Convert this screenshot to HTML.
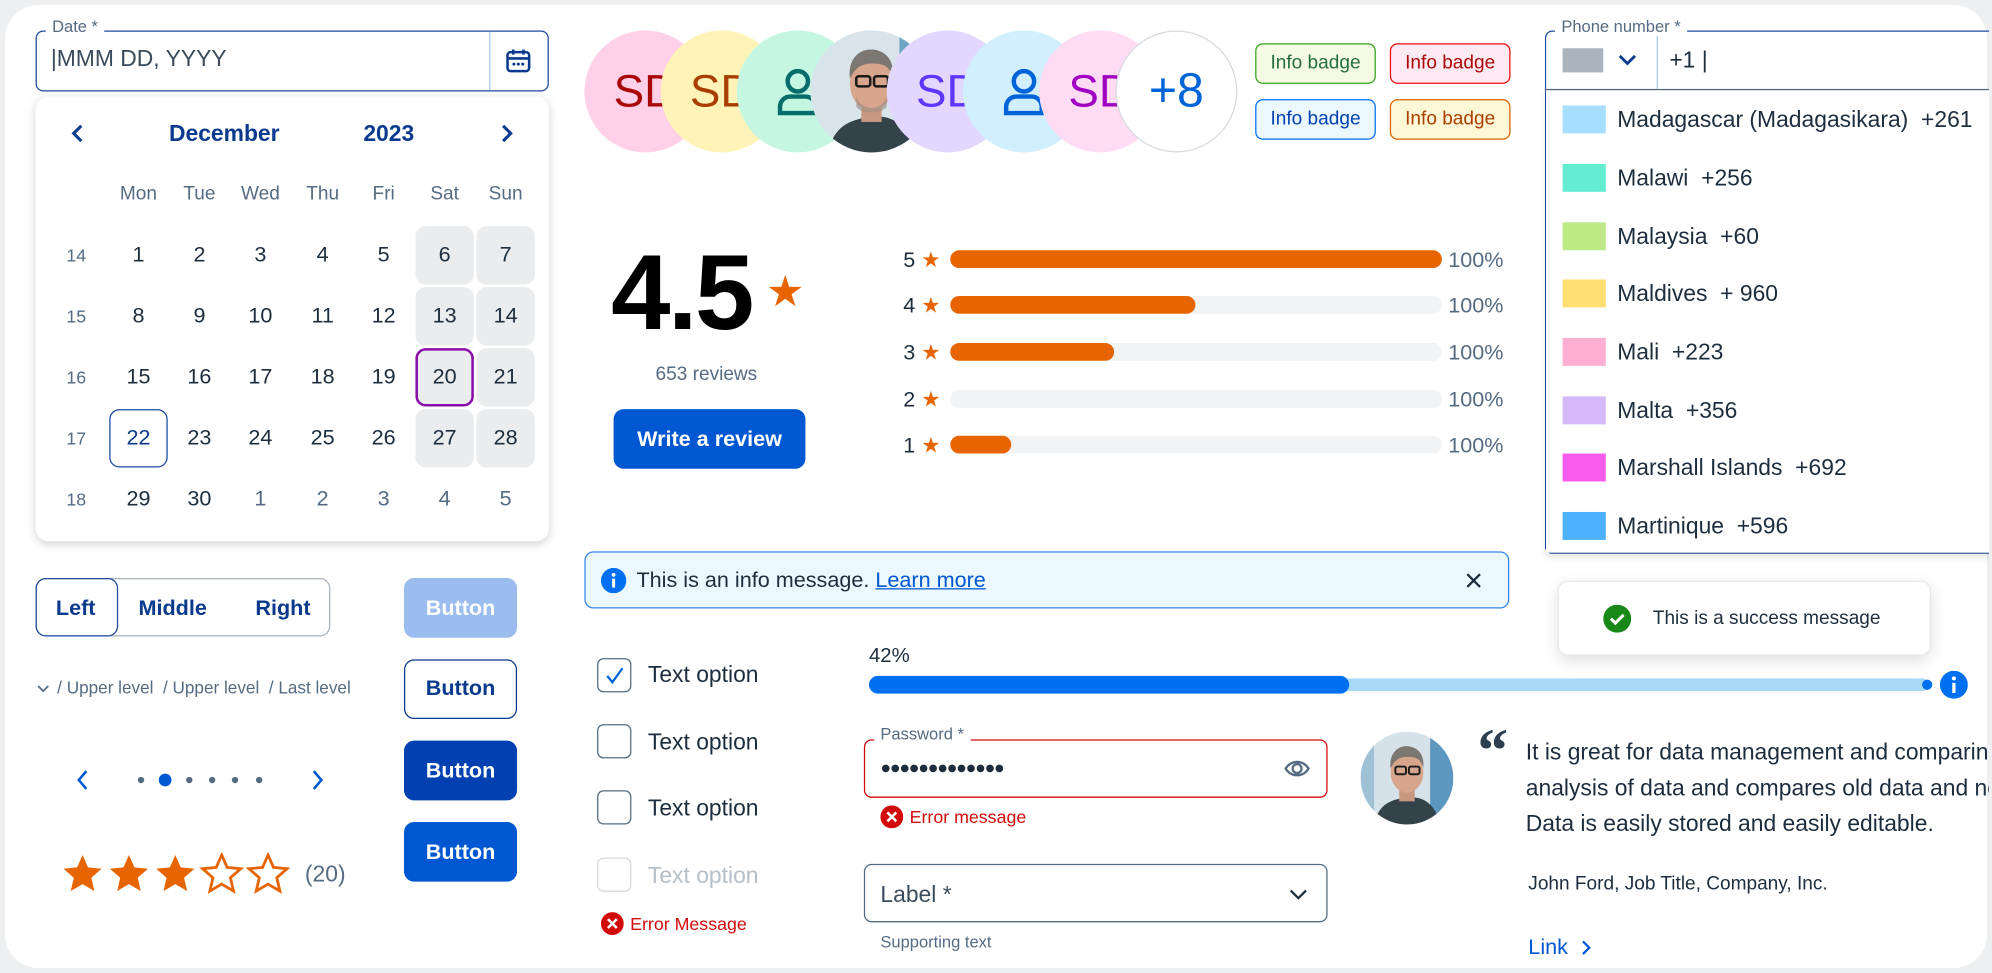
<!DOCTYPE html>
<html><head><meta charset="utf-8"><style>
*{box-sizing:border-box;margin:0;padding:0}
html,body{width:1992px;height:973px;overflow:hidden;background:#eeeff1;font-family:"Liberation Sans",sans-serif;color:#1d2d3e}
#w{position:absolute;left:0;top:0;width:1568px;height:766px;transform:scale(1.27041);transform-origin:0 0}
.card{position:absolute;left:4px;top:4px;width:1560px;height:758px;background:#fff;border-radius:26px}
.a{position:absolute}
.t{position:absolute;white-space:nowrap}
.cell{position:absolute;width:46px;height:46px;line-height:46px;text-align:center;font-size:17px;color:#1d2d3e;border-radius:8px}
.we{background:#eaecee}
.wk{position:absolute;width:30px;text-align:center;font-size:14px;color:#556b82}
.av{position:absolute;top:24px;width:96px;height:96px;border-radius:50%;overflow:hidden;text-align:center;line-height:96px;font-size:36px}
.badge{position:absolute;height:32px;width:95px;border-radius:6px;border:1px solid;font-size:15px;line-height:30px;text-align:center}
.bar{position:absolute;left:748px;width:387px;height:14px;border-radius:7px;background:#f1f3f4}
.bar i{position:absolute;left:0;top:0;height:14px;border-radius:7px;background:#e76500}
.btn{position:absolute;left:318px;width:89px;height:47px;border-radius:8px;text-align:center;line-height:47px;font-size:17px;font-weight:bold;color:#fff}
.cb{position:absolute;left:470px;width:27px;height:27px;border:1.5px solid #556b82;border-radius:5px;background:#fff}
.ct{position:absolute;left:510px;font-size:18px;color:#1d2d3e}
.sw{position:absolute;left:1230px;width:34px;height:22px}
.ctry{position:absolute;left:1273px;font-size:18px;color:#1d2d3e;white-space:nowrap}
</style></head><body><div id="w">
<div class="card"></div>

<div class="a" style="left:28px;top:24px;width:404px;height:48px;border:1.5px solid #1b4aa0;border-radius:6px"></div>
<div class="a" style="left:385px;top:25px;width:1px;height:46px;background:#a6cdf3"></div>
<div class="t" style="left:36px;top:13px;background:#fff;padding:0 5px;font-size:13px;color:#556b82">Date *</div>
<div class="t" style="left:40px;top:36px;font-size:18px;color:#3c4b5c">|MMM DD, YYYY</div>
<svg class="a" style="left:397px;top:37px" width="22" height="22" viewBox="0 0 22 22"><rect x="2.5" y="4" width="17" height="15" rx="2.5" fill="none" stroke="#0a3a8e" stroke-width="2"/><line x1="2.5" y1="9" x2="19.5" y2="9" stroke="#0a3a8e" stroke-width="2"/><line x1="7" y1="2" x2="7" y2="6" stroke="#0a3a8e" stroke-width="2"/><line x1="15" y1="2" x2="15" y2="6" stroke="#0a3a8e" stroke-width="2"/><circle cx="7.5" cy="13.5" r="1.2" fill="#0a3a8e"/><circle cx="11" cy="13.5" r="1.2" fill="#0a3a8e"/><circle cx="14.5" cy="13.5" r="1.2" fill="#0a3a8e"/></svg>

<div class="a" style="left:28px;top:76px;width:404px;height:350px;background:#fff;border-radius:10px;box-shadow:0 2px 8px rgba(0,0,0,.18)"></div>
<svg class="a" style="left:54px;top:97px" width="14" height="16"><path d="M10 2L4 8l6 6" fill="none" stroke="#0a3a8e" stroke-width="2.4"/></svg>
<svg class="a" style="left:392px;top:97px" width="14" height="16"><path d="M4 2l6 6-6 6" fill="none" stroke="#0a3a8e" stroke-width="2.4"/></svg>
<div class="t" style="left:133px;top:95px;font-size:18px;font-weight:bold;color:#0a3a8e">December</div>
<div class="t" style="left:286px;top:95px;font-size:18px;font-weight:bold;color:#0a3a8e">2023</div>
<div class="t" style="left:86px;top:144px;width:340px;font-size:15px;color:#556b82">
<span class="t" style="left:0;width:46px;text-align:center">Mon</span><span class="t" style="left:48px;width:46px;text-align:center">Tue</span><span class="t" style="left:96px;width:46px;text-align:center">Wed</span><span class="t" style="left:145px;width:46px;text-align:center">Thu</span><span class="t" style="left:193px;width:46px;text-align:center">Fri</span><span class="t" style="left:241px;width:46px;text-align:center">Sat</span><span class="t" style="left:289px;width:46px;text-align:center">Sun</span></div>
<div class="wk" style="left:45px;top:193px">14</div><div class="wk" style="left:45px;top:241px">15</div><div class="wk" style="left:45px;top:289px">16</div><div class="wk" style="left:45px;top:337px">17</div><div class="wk" style="left:45px;top:385px">18</div>
<div class="cell" style="left:86px;top:178px">1</div><div class="cell" style="left:134px;top:178px">2</div><div class="cell" style="left:182px;top:178px">3</div><div class="cell" style="left:231px;top:178px">4</div><div class="cell" style="left:279px;top:178px">5</div><div class="cell we" style="left:327px;top:178px">6</div><div class="cell we" style="left:375px;top:178px">7</div>
<div class="cell" style="left:86px;top:226px">8</div><div class="cell" style="left:134px;top:226px">9</div><div class="cell" style="left:182px;top:226px">10</div><div class="cell" style="left:231px;top:226px">11</div><div class="cell" style="left:279px;top:226px">12</div><div class="cell we" style="left:327px;top:226px">13</div><div class="cell we" style="left:375px;top:226px">14</div>
<div class="cell" style="left:86px;top:274px">15</div><div class="cell" style="left:134px;top:274px">16</div><div class="cell" style="left:182px;top:274px">17</div><div class="cell" style="left:231px;top:274px">18</div><div class="cell" style="left:279px;top:274px">19</div><div class="cell we" style="left:327px;top:274px;border:2px solid #8a0eaa;line-height:42px">20</div><div class="cell we" style="left:375px;top:274px">21</div>
<div class="cell" style="left:86px;top:322px;border:1.5px solid #1b4aa0;color:#0a3a8e;line-height:43px">22</div><div class="cell" style="left:134px;top:322px">23</div><div class="cell" style="left:182px;top:322px">24</div><div class="cell" style="left:231px;top:322px">25</div><div class="cell" style="left:279px;top:322px">26</div><div class="cell we" style="left:327px;top:322px">27</div><div class="cell we" style="left:375px;top:322px">28</div>
<div class="cell" style="left:86px;top:370px">29</div><div class="cell" style="left:134px;top:370px">30</div><div class="cell" style="left:182px;top:370px;color:#556b82">1</div><div class="cell" style="left:231px;top:370px;color:#556b82">2</div><div class="cell" style="left:279px;top:370px;color:#556b82">3</div><div class="cell" style="left:327px;top:370px;color:#556b82">4</div><div class="cell" style="left:375px;top:370px;color:#556b82">5</div>

<div class="av" style="left:460px;background:#ffd0e7;color:#aa0808">SD</div>
<div class="av" style="left:520px;background:#fff3b8;color:#a93e00">SD</div>
<div class="av" style="left:580px;background:#c5f6e2"><svg style="margin-top:28px" width="40" height="40" viewBox="0 0 40 40"><circle cx="20" cy="12" r="8" fill="none" stroke="#046c6a" stroke-width="3.5"/><path d="M6 37v-5a8 8 0 0 1 8-8h12a8 8 0 0 1 8 8v5z" fill="none" stroke="#046c6a" stroke-width="3.5"/></svg></div>
<div class="av" style="left:638px;background:#cfe1ea"><svg width="96" height="96" viewBox="0 0 96 96"><rect width="96" height="96" fill="#d9e4ea"/><rect x="70" y="0" width="26" height="96" fill="#6ea4c4"/><path d="M14 96c4-20 16-26 34-28s30 8 34 28z" fill="#34424a"/><rect x="40" y="56" width="16" height="16" fill="#c99880"/><ellipse cx="48" cy="42" rx="17" ry="21" fill="#d7a58c"/><path d="M31 38c-2-16 8-24 18-23s17 8 16 22c-3-8-6-11-16-11s-14 4-18 12z" fill="#7d7772"/><rect x="36" y="36" width="11" height="8" rx="2" fill="none" stroke="#1a1a1a" stroke-width="2"/><rect x="50" y="36" width="11" height="8" rx="2" fill="none" stroke="#1a1a1a" stroke-width="2"/><path d="M36 52c4 12 20 12 24 0v8c-4 6-20 6-24 0z" fill="#9a8a80" opacity=".6"/></svg></div>
<div class="av" style="left:698px;background:#e2d8ff;color:#5d36ff">SD</div>
<div class="av" style="left:758px;background:#d1efff"><svg style="margin-top:28px" width="40" height="40" viewBox="0 0 40 40"><circle cx="20" cy="12" r="8" fill="none" stroke="#0064d9" stroke-width="3.5"/><path d="M6 37v-5a8 8 0 0 1 8-8h12a8 8 0 0 1 8 8v5z" fill="none" stroke="#0064d9" stroke-width="3.5"/></svg></div>
<div class="av" style="left:818px;background:#ffdcf3;color:#a100c2">SD</div>
<div class="av" style="left:878px;background:#fff;border:1px solid #d5dadd;color:#0064d9;font-size:38px;line-height:94px">+8</div>

<div class="badge" style="left:988px;top:34px;border-color:#36a41d;background:#f5fae5;color:#256f3a">Info badge</div>
<div class="badge" style="left:1094px;top:34px;border-color:#e90b0b;background:#ffeaf4;color:#aa0808">Info badge</div>
<div class="badge" style="left:988px;top:78px;border-color:#0070f2;background:#ebf8ff;color:#0040b0">Info badge</div>
<div class="badge" style="left:1094px;top:78px;border-color:#dd6100;background:#fff8d6;color:#a93e00">Info badge</div>

<div class="t" style="left:481px;top:182px;font-size:84px;font-weight:bold;color:#000;letter-spacing:-2px">4.5</div>
<div class="t" style="left:603px;top:210px;font-size:34px;color:#e76500">★</div>
<div class="t" style="left:516px;top:286px;font-size:15px;color:#556b82">653 reviews</div>
<div class="a" style="left:483px;top:322px;width:151px;height:47px;border-radius:8px;background:#0057d2;color:#fff;font-size:17px;font-weight:bold;text-align:center;line-height:47px">Write a review</div>
<div class="t" style="left:711px;top:195px;font-size:17px;line-height:20px">5 <span style="color:#e76500">★</span></div>
<div class="t" style="left:711px;top:231px;font-size:17px;line-height:20px">4 <span style="color:#e76500">★</span></div>
<div class="t" style="left:711px;top:268px;font-size:17px;line-height:20px">3 <span style="color:#e76500">★</span></div>
<div class="t" style="left:711px;top:305px;font-size:17px;line-height:20px">2 <span style="color:#e76500">★</span></div>
<div class="t" style="left:711px;top:341px;font-size:17px;line-height:20px">1 <span style="color:#e76500">★</span></div>
<div class="bar" style="top:197px"><i style="width:387px"></i></div>
<div class="bar" style="top:233px"><i style="width:193px"></i></div>
<div class="bar" style="top:270px"><i style="width:129px"></i></div>
<div class="bar" style="top:307px"></div>
<div class="bar" style="top:343px"><i style="width:48px"></i></div>
<div class="t" style="left:1140px;top:195px;font-size:17px;color:#556b82">100%</div>
<div class="t" style="left:1140px;top:231px;font-size:17px;color:#556b82">100%</div>
<div class="t" style="left:1140px;top:268px;font-size:17px;color:#556b82">100%</div>
<div class="t" style="left:1140px;top:305px;font-size:17px;color:#556b82">100%</div>
<div class="t" style="left:1140px;top:341px;font-size:17px;color:#556b82">100%</div>

<div class="a" style="left:1216px;top:24px;width:360px;height:412px;border:1.5px solid #1b4aa0;border-radius:6px;border-right:none"></div>
<div class="a" style="left:1216px;top:70px;width:360px;height:1.5px;background:#556b82"></div>
<div class="a" style="left:1217px;top:71px;width:360px;height:364px;background:#fff;box-shadow:0 3px 6px rgba(0,0,0,.12)"></div>
<div class="a" style="left:1304px;top:25px;width:1px;height:45px;background:#a6cdf3"></div>
<div class="t" style="left:1224px;top:13px;background:#fff;padding:0 5px;font-size:13px;color:#556b82">Phone number *</div>
<div class="a" style="left:1230px;top:38px;width:32px;height:19px;background:#a9b4be"></div>
<svg class="a" style="left:1273px;top:41px" width="16" height="12"><path d="M2 3l6 6 6-6" fill="none" stroke="#0a3a8e" stroke-width="2.2"/></svg>
<div class="t" style="left:1314px;top:37px;font-size:18px">+1 |</div>
<div class="sw" style="top:83px;background:#a6deff"></div><div class="ctry" style="top:84px">Madagascar (Madagasikara) &nbsp;+261</div>
<div class="sw" style="top:129px;background:#64edd2"></div><div class="ctry" style="top:130px">Malawi &nbsp;+256</div>
<div class="sw" style="top:175px;background:#bde986"></div><div class="ctry" style="top:176px">Malaysia &nbsp;+60</div>
<div class="sw" style="top:220px;background:#ffdf72"></div><div class="ctry" style="top:221px">Maldives &nbsp;+ 960</div>
<div class="sw" style="top:266px;background:#ffafd2"></div><div class="ctry" style="top:267px">Mali &nbsp;+223</div>
<div class="sw" style="top:312px;background:#d5b8f8"></div><div class="ctry" style="top:313px">Malta &nbsp;+356</div>
<div class="sw" style="top:357px;background:#f75cec"></div><div class="ctry" style="top:358px">Marshall Islands &nbsp;+692</div>
<div class="sw" style="top:403px;background:#4db1ff"></div><div class="ctry" style="top:404px">Martinique &nbsp;+596</div>

<div class="a" style="left:1226px;top:457px;width:294px;height:59px;background:#fff;border:1px solid #e5e8ea;border-radius:8px;box-shadow:0 4px 12px rgba(0,0,0,.12)"></div>
<svg class="a" style="left:1262px;top:476px" width="22" height="22"><circle cx="11" cy="11" r="11" fill="#188918"/><path d="M6 11l3.5 3.5L16 8" fill="none" stroke="#fff" stroke-width="2.4"/></svg>
<div class="t" style="left:1301px;top:478px;font-size:15px">This is a success message</div>

<div class="a" style="left:460px;top:434px;width:728px;height:45px;background:#ebf8ff;border:1.5px solid #3585e6;border-radius:7px"></div>
<svg class="a" style="left:473px;top:447px" width="20" height="20"><circle cx="10" cy="10" r="10" fill="#0070f2"/><rect x="8.8" y="8.5" width="2.4" height="7" fill="#fff"/><circle cx="10" cy="5.5" r="1.5" fill="#fff"/></svg>
<div class="t" style="left:501px;top:447px;font-size:17px">This is an info message. <span style="color:#0057d2;text-decoration:underline">Learn more</span></div>
<svg class="a" style="left:1154px;top:451px" width="12" height="12"><path d="M1 1l10 10M11 1L1 11" stroke="#1d2d3e" stroke-width="1.8"/></svg>

<div class="a" style="left:28px;top:455px;width:232px;height:46px;border:1px solid #a9b4be;border-radius:8px"></div>
<div class="a" style="left:28px;top:455px;width:65px;height:46px;border:1.5px solid #1b4aa0;border-radius:8px"></div>
<div class="t" style="left:44px;top:469px;font-size:17px;font-weight:bold;color:#0a3a8e">Left</div>
<div class="t" style="left:109px;top:469px;font-size:17px;font-weight:bold;color:#0a3a8e">Middle</div>
<div class="t" style="left:201px;top:469px;font-size:17px;font-weight:bold;color:#0a3a8e">Right</div>

<div class="btn" style="top:455px;background:#9bbcee">Button</div>
<div class="btn" style="top:519px;background:#fff;border:1.5px solid #0a3a8e;color:#0a3a8e;line-height:44px">Button</div>
<div class="btn" style="top:583px;background:#0040b0">Button</div>
<div class="btn" style="top:647px;background:#0057d2">Button</div>

<svg class="a" style="left:29px;top:538px" width="10" height="8"><path d="M1 2l4 4 4-4" fill="none" stroke="#556b82" stroke-width="1.4"/></svg>
<div class="t" style="left:45px;top:534px;font-size:13.5px;color:#556b82">/ Upper level &nbsp;/ Upper level &nbsp;/ Last level</div>

<svg class="a" style="left:59px;top:605px" width="12" height="18"><path d="M9 2L3 9l6 7" fill="none" stroke="#0057d2" stroke-width="2"/></svg>
<svg class="a" style="left:244px;top:605px" width="12" height="18"><path d="M3 2l6 7-6 7" fill="none" stroke="#0057d2" stroke-width="2"/></svg>
<svg class="a" style="left:105px;top:606px" width="105" height="16"><circle cx="6" cy="8" r="2.5" fill="#556b82"/><circle cx="25" cy="8" r="5" fill="#0057d2"/><circle cx="44" cy="8" r="2.5" fill="#556b82"/><circle cx="62" cy="8" r="2.5" fill="#556b82"/><circle cx="80" cy="8" r="2.5" fill="#556b82"/><circle cx="99" cy="8" r="2.5" fill="#556b82"/></svg>

<svg class="a" style="left:48px;top:671px" width="182" height="34" viewBox="0 0 182 34">
<defs><path id="s" d="M17 2l4.3 9.8 10.7 1-8.1 7.1 2.4 10.5L17 24.9 7.7 30.4l2.4-10.5L2 12.8l10.7-1z"/></defs>
<use href="#s" fill="#e76500"/><use href="#s" x="36.5" fill="#e76500"/><use href="#s" x="73" fill="#e76500"/><use href="#s" x="109.5" fill="none" stroke="#e76500" stroke-width="2.2"/><use href="#s" x="146" fill="none" stroke="#e76500" stroke-width="2.2"/></svg>
<div class="t" style="left:240px;top:678px;font-size:18px;color:#556b82">(20)</div>

<div class="cb" style="top:518px"></div><svg class="a" style="left:475px;top:523px" width="18" height="18"><path d="M3 9l4 5 8-11" fill="none" stroke="#0064d9" stroke-width="1.8"/></svg>
<div class="ct" style="top:521px">Text option</div>
<div class="cb" style="top:570px"></div><div class="ct" style="top:574px">Text option</div>
<div class="cb" style="top:622px"></div><div class="ct" style="top:626px">Text option</div>
<div class="cb" style="top:675px;border-color:#d5dadd"></div><div class="ct" style="top:679px;color:#b6bfc7">Text option</div>
<svg class="a" style="left:473px;top:718px" width="18" height="18"><circle cx="9" cy="9" r="9" fill="#d20a0a"/><path d="M5.5 5.5l7 7M12.5 5.5l-7 7" stroke="#fff" stroke-width="2"/></svg>
<div class="t" style="left:496px;top:719px;font-size:14px;color:#d20a0a">Error Message</div>

<div class="t" style="left:684px;top:508px;font-size:16px">42%</div>
<div class="a" style="left:684px;top:534px;width:834px;height:10px;border-radius:5px;background:#a9d9f8"></div>
<div class="a" style="left:684px;top:532px;width:378px;height:14px;border-radius:7px;background:#0070f2"></div>
<div class="a" style="left:1513px;top:535px;width:8px;height:8px;border-radius:50%;background:#0070f2"></div>
<svg class="a" style="left:1527px;top:528px" width="22" height="22"><circle cx="11" cy="11" r="11" fill="#0070f2"/><rect x="9.7" y="9.5" width="2.6" height="8" fill="#fff"/><circle cx="11" cy="6" r="1.6" fill="#fff"/></svg>

<div class="a" style="left:680px;top:582px;width:365px;height:46px;border:1.5px solid #d20a0a;border-radius:6px"></div>
<div class="t" style="left:688px;top:570px;background:#fff;padding:0 5px;font-size:13px;color:#556b82">Password *</div>
<div class="t" style="left:693px;top:596px;font-size:14px;letter-spacing:-1px;color:#1d2d3e">●●●●●●●●●●●●●</div>
<svg class="a" style="left:1010px;top:594px" width="22" height="22"><path d="M2 11c4-7 14-7 18 0-4 7-14 7-18 0z" fill="none" stroke="#556b82" stroke-width="1.8"/><circle cx="11" cy="11" r="3.5" fill="none" stroke="#556b82" stroke-width="1.8"/></svg>
<svg class="a" style="left:693px;top:634px" width="18" height="18"><circle cx="9" cy="9" r="9" fill="#d20a0a"/><path d="M5.5 5.5l7 7M12.5 5.5l-7 7" stroke="#fff" stroke-width="2"/></svg>
<div class="t" style="left:716px;top:635px;font-size:14px;color:#d20a0a">Error message</div>

<div class="a" style="left:680px;top:680px;width:365px;height:46px;border:1.5px solid #556b82;border-radius:6px"></div>
<div class="t" style="left:693px;top:694px;font-size:18px;color:#3c4b5c">Label *</div>
<svg class="a" style="left:1014px;top:698px" width="16" height="12"><path d="M2 3l6 6 6-6" fill="none" stroke="#1d2d3e" stroke-width="1.8"/></svg>
<div class="t" style="left:693px;top:734px;font-size:13px;color:#556b82">Supporting text</div>

<div class="a" style="left:1071px;top:576px;width:73px;height:73px;border-radius:50%;overflow:hidden"><svg width="73" height="73" viewBox="0 0 96 96"><rect width="96" height="96" fill="#d5e2ea"/><rect x="72" y="0" width="24" height="96" fill="#5c97c0"/><rect x="0" y="0" width="14" height="96" fill="#9fc1d6"/><path d="M14 96c4-20 16-26 34-28s30 8 34 28z" fill="#34424a"/><rect x="40" y="56" width="16" height="16" fill="#c99880"/><ellipse cx="48" cy="42" rx="17" ry="21" fill="#d7a58c"/><path d="M31 38c-2-16 8-24 18-23s17 8 16 22c-3-8-6-11-16-11s-14 4-18 12z" fill="#7d7772"/><rect x="36" y="36" width="11" height="8" rx="2" fill="none" stroke="#1a1a1a" stroke-width="2"/><rect x="50" y="36" width="11" height="8" rx="2" fill="none" stroke="#1a1a1a" stroke-width="2"/></svg></div>
<div class="t" style="left:1163px;top:562px;font-size:48px;font-weight:bold;color:#2c3e50;font-family:'Liberation Serif',serif;line-height:60px">“</div>
<div class="t" style="left:1201px;top:578px;font-size:18px;line-height:28px">It is great for data management and comparing<br>analysis of data and compares old data and new.<br>Data is easily stored and easily editable.</div>
<div class="t" style="left:1203px;top:687px;font-size:15px">John Ford, Job Title, Company, Inc.</div>
<div class="t" style="left:1203px;top:736px;font-size:17px;color:#0057d2">Link</div>
<svg class="a" style="left:1244px;top:739px" width="10" height="14"><path d="M2 2l5 5-5 5" fill="none" stroke="#0057d2" stroke-width="1.8"/></svg>
</div>
<div style="position:absolute;left:1989px;top:0;width:3px;height:973px;background:#eeeff1"></div>
</body></html>
